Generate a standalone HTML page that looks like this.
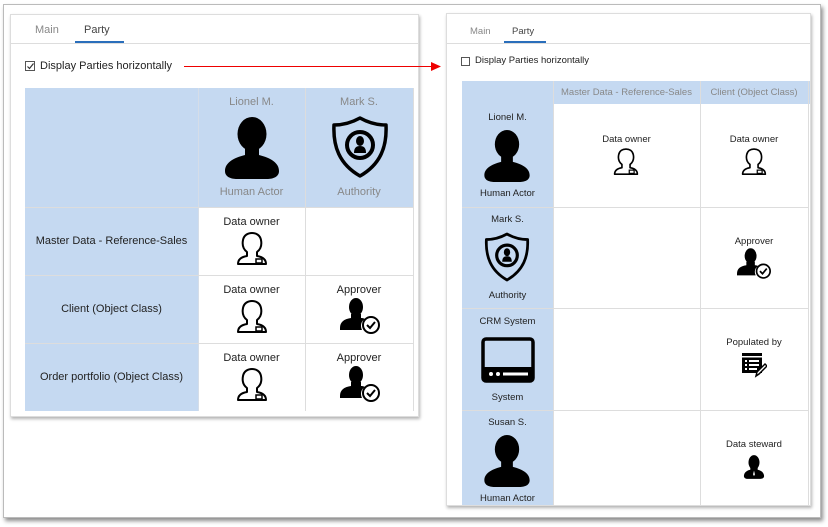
<!DOCTYPE html>
<html><head><meta charset="utf-8"><style>
*{box-sizing:border-box;margin:0;padding:0}
body{width:828px;height:527px;background:#fff;font-family:"Liberation Sans",sans-serif;position:relative;overflow:hidden;color:#222}
.a{position:absolute}
.frame{left:3px;top:4px;width:818px;height:514px;border:1px solid #bbb;box-shadow:2px 3px 4px rgba(0,0,0,.45);background:#fff}
.panel{background:#fff;border:1px solid #ddd;box-shadow:1px 2px 3px rgba(0,0,0,.3)}
.t{position:absolute;white-space:nowrap;text-align:center}
.blue{background:#c5d9f1}
.vl{position:absolute;width:1px;background:#ddd}
.hl{position:absolute;height:1px;background:#ddd}
</style></head><body>
<div class="a frame"></div>
<svg width="0" height="0" style="position:absolute"><defs>
<symbol id="p" viewBox="0 0 54 62"><ellipse cx="27" cy="17" rx="14.5" ry="17" fill="#000"/><path d="M20 30 L20 38 C8 41 0 46 0 54 C0 60 6 62 12 62 L42 62 C48 62 54 60 54 54 C54 46 46 41 34 38 L34 30 Z" fill="#000"/></symbol>
<symbol id="sh" viewBox="0 0 58 62"><path d="M29 2 C20 7 11 9 3 9 C2 30 8 48 29 60 C50 48 56 30 55 9 C47 9 38 7 29 2 Z" fill="none" stroke="#000" stroke-width="3.5" stroke-linejoin="round"/><circle cx="29" cy="29" r="13" fill="none" stroke="#000" stroke-width="4"/><ellipse cx="29" cy="25" rx="4" ry="5" fill="#000"/><path d="M23 37 C23 32 25 30 29 30 C33 30 35 32 35 37 Z" fill="#000"/></symbol>
<symbol id="o" viewBox="0 0 32 34"><path d="M11 20 L11 24 C5 25 2 28 2 32 L30 32 C30 28 27 25 21 24 L21 20 C25 17 26 13 25 8 C24 3 20 1 16 1 C12 1 8 3 7 8 C6 13 7 17 11 20 Z" fill="none" stroke="#000" stroke-width="2" stroke-linejoin="round"/><rect x="20" y="27" width="6" height="4" fill="none" stroke="#000" stroke-width="1.5"/></symbol>
<symbol id="ap" viewBox="0 0 40 36"><ellipse cx="16" cy="9" rx="7" ry="9" fill="#000"/><path d="M11 16 L11 20 C4 21 0 24 0 30 L0 32 L22 32 C20 28 21 23 25 21 C23 20 22 20 21 20 L21 16 Z" fill="#000"/><circle cx="31" cy="27" r="8" fill="#fff" stroke="#000" stroke-width="2"/><path d="M27 27 L30 30 L35 24" fill="none" stroke="#000" stroke-width="2"/></symbol>
<symbol id="sys" viewBox="0 0 54 46"><rect x="2" y="2" width="50" height="42" rx="3" fill="none" stroke="#000" stroke-width="3.5"/><rect x="2" y="30" width="50" height="14" rx="2" fill="#000"/><circle cx="10" cy="37" r="2" fill="#fff"/><circle cx="17" cy="37" r="2" fill="#fff"/><rect x="22" y="35.5" width="25" height="3" fill="#fff"/></symbol>
<symbol id="pop" viewBox="0 0 26 26"><rect x="1" y="1" width="20" height="20" fill="#000"/><rect x="1" y="4" width="20" height="1.5" fill="#fff"/><rect x="4" y="8" width="2" height="2" fill="#fff"/><rect x="8" y="8" width="10" height="2" fill="#fff"/><rect x="4" y="12" width="2" height="2" fill="#fff"/><rect x="8" y="12" width="10" height="2" fill="#fff"/><rect x="4" y="16" width="2" height="2" fill="#fff"/><rect x="8" y="16" width="8" height="2" fill="#fff"/><path d="M15 24 L16 20 L24 12 L26 14 L18 22 Z" fill="#fff" stroke="#000" stroke-width="1.5"/></symbol>
<symbol id="st" viewBox="0 0 24 26"><ellipse cx="12" cy="8" rx="6" ry="8" fill="#000"/><path d="M8 14 L8 16 C3 17 1 20 1 23 C1 25 3 26 5 26 L19 26 C21 26 23 25 23 23 C23 20 21 17 16 16 L16 14 Z" fill="#000"/><path d="M12 17 L11 21 L12 23 L13 21 Z" fill="#fff"/></symbol>
</defs></svg>

<div class="a panel" style="left:10px;top:14px;width:409px;height:403px"></div>
<div class="t" style="left:35px;top:24px;font-size:11px;color:#888">Main</div>
<div class="t" style="left:84px;top:24px;font-size:11px;color:#444">Party</div>
<div class="a" style="left:75px;top:41px;width:49px;height:2px;background:#2a6ebb"></div>
<div class="a" style="left:11px;top:43px;width:407px;height:1px;background:#ddd"></div>
<div class="a" style="left:25px;top:61px;width:10px;height:10px;border:1px solid #555"></div>
<svg class="a" style="left:26px;top:62px" width="9" height="9"><path d="M1.5 4.5 L3.5 6.5 L7.5 1.5" fill="none" stroke="#333" stroke-width="1.2"/></svg>
<div class="t" style="left:40px;top:60px;font-size:11px;color:#222">Display Parties horizontally</div>
<div class="a" style="left:184px;top:66px;width:250px;height:1px;background:#e00"></div>
<svg class="a" style="left:431px;top:62px" width="10" height="9"><path d="M0 0 L10 4.5 L0 9 Z" fill="#e00"/></svg>

<div class="a blue" style="left:25px;top:88px;width:388px;height:119px"></div>
<div class="a blue" style="left:25px;top:207px;width:173px;height:204px"></div>
<div class="a" style="left:198px;top:207px;width:215px;height:204px;background:#fff"></div>
<div class="vl" style="left:198px;top:88px;height:323px;background:#d5dde8"></div>
<div class="vl" style="left:305px;top:88px;height:323px"></div>
<div class="vl" style="left:413px;top:88px;height:323px"></div>
<div class="hl" style="left:25px;top:207px;width:388px"></div>
<div class="hl" style="left:25px;top:275px;width:388px"></div>
<div class="hl" style="left:25px;top:343px;width:388px"></div>

<div class="t" style="left:198px;width:107px;top:96px;font-size:11px;color:#888">Lionel M.</div>
<svg class="a" style="left:225px;top:117px" width="54" height="62"><use href="#p"/></svg>
<div class="t" style="left:198px;width:107px;top:186px;font-size:11px;color:#888">Human Actor</div>
<div class="t" style="left:305px;width:108px;top:96px;font-size:11px;color:#888">Mark S.</div>
<svg class="a" style="left:331px;top:116px" width="58" height="62"><use href="#sh"/></svg>
<div class="t" style="left:305px;width:108px;top:186px;font-size:11px;color:#888">Authority</div>

<div class="t" style="left:25px;width:173px;top:235px;font-size:11px">Master Data - Reference-Sales</div>
<div class="t" style="left:25px;width:173px;top:303px;font-size:11px">Client (Object Class)</div>
<div class="t" style="left:25px;width:173px;top:371px;font-size:11px">Order portfolio (Object Class)</div>

<div class="t" style="left:198px;width:107px;top:216px;font-size:11px">Data owner</div>
<svg class="a" style="left:236px;top:232px" width="32" height="34"><use href="#o"/></svg>
<div class="t" style="left:198px;width:107px;top:284px;font-size:11px">Data owner</div>
<svg class="a" style="left:236px;top:300px" width="32" height="34"><use href="#o"/></svg>
<div class="t" style="left:198px;width:107px;top:352px;font-size:11px">Data owner</div>
<svg class="a" style="left:236px;top:368px" width="32" height="34"><use href="#o"/></svg>
<div class="t" style="left:305px;width:108px;top:284px;font-size:11px">Approver</div>
<svg class="a" style="left:340px;top:298px" width="40" height="36"><use href="#ap"/></svg>
<div class="t" style="left:305px;width:108px;top:352px;font-size:11px">Approver</div>
<svg class="a" style="left:340px;top:366px" width="40" height="36"><use href="#ap"/></svg>

<div class="a panel" style="left:446px;top:13px;width:365px;height:493px"></div>
<div class="t" style="left:470px;top:26px;font-size:9.5px;color:#888">Main</div>
<div class="t" style="left:512px;top:26px;font-size:9.5px;color:#444">Party</div>
<div class="a" style="left:504px;top:41px;width:42px;height:2px;background:#2a6ebb"></div>
<div class="a" style="left:447px;top:43px;width:363px;height:1px;background:#ddd"></div>
<div class="a" style="left:461px;top:57px;width:9px;height:9px;border:1px solid #555"></div>
<div class="t" style="left:475px;top:55px;font-size:9.5px;color:#222">Display Parties horizontally</div>

<div class="a blue" style="left:462px;top:81px;width:348px;height:23px"></div>
<div class="a blue" style="left:462px;top:104px;width:91px;height:401px"></div>
<div class="vl" style="left:553px;top:81px;height:424px"></div>
<div class="vl" style="left:700px;top:81px;height:424px"></div>
<div class="vl" style="left:808px;top:81px;height:424px"></div>
<div class="hl" style="left:462px;top:207px;width:347px"></div>
<div class="hl" style="left:462px;top:308px;width:347px"></div>
<div class="hl" style="left:462px;top:410px;width:347px"></div>
<div class="t" style="left:553px;width:147px;top:87px;font-size:9.5px;color:#888">Master Data - Reference-Sales</div>
<div class="t" style="left:700px;width:108px;top:87px;font-size:9.5px;color:#888">Client (Object Class)</div>

<div class="t" style="left:462px;width:91px;top:112px;font-size:9.5px">Lionel M.</div>
<svg class="a" style="left:484px;top:130px" width="46" height="52"><use href="#p"/></svg>
<div class="t" style="left:462px;width:91px;top:188px;font-size:9.5px">Human Actor</div>
<div class="t" style="left:462px;width:91px;top:214px;font-size:9.5px">Mark S.</div>
<svg class="a" style="left:484px;top:230px" width="46" height="54"><use href="#sh"/></svg>
<div class="t" style="left:462px;width:91px;top:290px;font-size:9.5px">Authority</div>
<div class="t" style="left:462px;width:91px;top:316px;font-size:9.5px">CRM System</div>
<svg class="a" style="left:481px;top:337px" width="54" height="46"><use href="#sys"/></svg>
<div class="t" style="left:462px;width:91px;top:392px;font-size:9.5px">System</div>
<div class="t" style="left:462px;width:91px;top:417px;font-size:9.5px">Susan S.</div>
<svg class="a" style="left:484px;top:435px" width="46" height="52"><use href="#p"/></svg>
<div class="t" style="left:462px;width:91px;top:493px;font-size:9.5px">Human Actor</div>

<div class="t" style="left:553px;width:147px;top:134px;font-size:9.5px">Data owner</div>
<svg class="a" style="left:613px;top:148px" width="26" height="28"><use href="#o"/></svg>
<div class="t" style="left:700px;width:108px;top:134px;font-size:9.5px">Data owner</div>
<svg class="a" style="left:741px;top:148px" width="26" height="28"><use href="#o"/></svg>
<div class="t" style="left:700px;width:108px;top:236px;font-size:9.5px">Approver</div>
<svg class="a" style="left:737px;top:248px" width="34" height="31"><use href="#ap"/></svg>
<div class="t" style="left:700px;width:108px;top:337px;font-size:9.5px">Populated by</div>
<svg class="a" style="left:741px;top:352px" width="26" height="26"><use href="#pop"/></svg>
<div class="t" style="left:700px;width:108px;top:439px;font-size:9.5px">Data steward</div>
<svg class="a" style="left:743px;top:455px" width="22" height="24"><use href="#st"/></svg>
</body></html>
